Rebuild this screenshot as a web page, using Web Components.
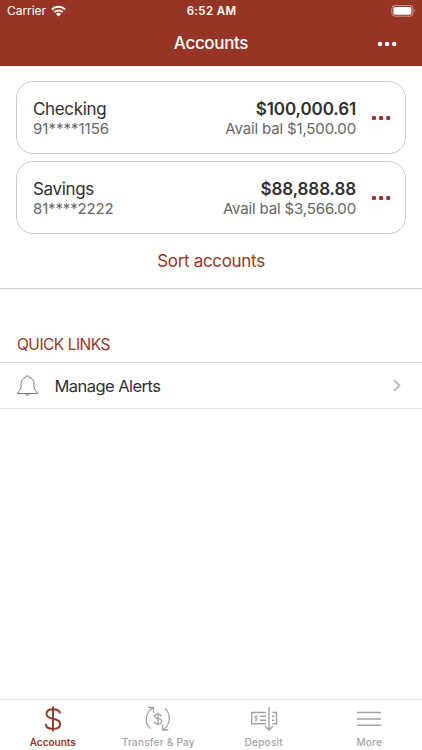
<!DOCTYPE html>
<html lang="en">
<head>
<meta charset="utf-8">
<title>Accounts</title>
<style>
html,body{margin:0;height:100%;background:#fff}
body{font-family:Inter,"Liberation Sans",sans-serif;color:#303030;--brand:#963526}
</style>
</head>
<body>
<bank-app></bank-app>
<script>
function define(name, html) {
  const t = document.createElement('template');
  t.innerHTML = html;
  customElements.define(name, class extends HTMLElement {
    constructor() {
      super();
      this.attachShadow({ mode: 'open' }).appendChild(t.content.cloneNode(true));
    }
  });
}

define('more-dots', `
<style>:host{display:block}svg{display:block}</style>
<svg width="20" height="6" viewBox="0 0 20 6" fill="currentColor"><circle cx="3" cy="3" r="2.2"/><circle cx="10.100" cy="3" r="2.200"/><circle cx="17.200" cy="3" r="2.200"/></svg>`);

define('status-bar', `
<style>
:host{display:grid;grid-template-columns:1fr auto 1fr;align-items:center;height:22px;padding:0 6px 0 7px;font-size:12px;line-height:22px}
.l{display:flex;align-items:center;gap:5px;letter-spacing:-.05px}
.t{font-weight:600;font-size:11.5px;letter-spacing:.35px}
.b{justify-self:end}
svg{display:block}
</style>
<div class="l"><span>Carrier</span><svg width="15" height="12" viewBox="0 0 15 12"><g fill="none" stroke="#fff" stroke-width="2"><path d="M.9 4.500a9.400 9.400 0 0 1 13.200 0"/><path d="M3.300 7.100a6 6 0 0 1 8.400 0"/></g><path d="M5 8.900a3.600 3.600 0 0 1 5 0L7.500 11.500z" fill="#fff"/></svg></div>
<div class="t">6:52 AM</div>
<svg class="b" width="25" height="12" viewBox="0 0 25 12"><rect x=".9" y=".6" width="21" height="10.600" rx="3" fill="none" stroke="#cf9b92"/><rect x="2.400" y="2.100" width="18" height="7.600" rx="1.600" fill="#fff"/><path d="M23.200 4.200q1.600 1.700 0 3.400z" fill="#cf9b92"/></svg>`);

define('nav-bar', `
<style>
:host{display:grid;grid-template-columns:1fr auto 1fr;align-items:center;height:43px;padding:0 25px}
h1{grid-column:2;margin:0;font-size:17px;font-weight:500;line-height:43px;letter-spacing:-.35px}
more-dots{justify-self:end}
</style><h1><slot></slot></h1><more-dots></more-dots>`);

define('account-card', `
<style>
:host{display:flex;align-items:center;box-sizing:border-box;height:73px;border:1px solid #ccc;border-radius:17px;padding:0 14px 0 16px}
.n{flex:1}.v{text-align:right;margin-right:15px}
.n,.v{padding-top:1px}
.top{font-size:17px;line-height:20px;letter-spacing:-.35px}.v .top{font-weight:600;letter-spacing:-.1px}
.sub{font-size:15px;line-height:19px;color:#666;letter-spacing:-.15px}
more-dots{color:var(--brand)}
</style>
<div class="n"><div class="top"><slot name="name"></slot></div><div class="sub"><slot name="number"></slot></div></div>
<div class="v"><div class="top"><slot name="balance"></slot></div><div class="sub">Avail bal <slot name="available"></slot></div></div>
<more-dots></more-dots>`);

define('link-row', `
<style>
:host{display:flex;align-items:center;box-sizing:border-box;height:47px;border-top:1px solid #dedede;border-bottom:1px solid #e8e8e8;padding:0 20px 0 16px;font-size:16.5px;letter-spacing:-.55px}
span{flex:1;margin-left:15.5px}
svg{display:block}
</style>
<svg width="23" height="22" viewBox="0 0 23 22" fill="none" stroke="#777" stroke-width="1" stroke-linejoin="round"><path d="M9.800 2.500a1.700 1.700 0 0 1 3.400 0C16.400 3.200 18 5.600 18 8.500v3.300c0 3 2.400 4.200 3.700 6.700H1.300C2.600 16 5 14.800 5 11.800V8.500C5 5.600 6.600 3.200 9.800 2.500M9.300 18.500a2.300 2.300 0 0 0 4.400 0"/></svg>
<span><slot></slot></span>
<svg width="10" height="14" viewBox="0 0 10 14" fill="none" stroke="#bdbdbd" stroke-width="1.800"><path d="M2 1 7.500 6.500 2 12"/></svg>`);

define('tab-item', `
<style>
:host{display:flex;flex-direction:column;align-items:center;color:#a3a3a3;font-size:10px;font-weight:500;line-height:13px;letter-spacing:.25px}
:host([active]){color:var(--brand);font-weight:600;letter-spacing:0}
.i{height:30px;margin:4px 0 2px;display:flex;align-items:center}
</style><div class="i"><slot name="icon"></slot></div><div><slot></slot></div>`);

define('tab-bar', `
<style>:host{display:grid;grid-template-columns:repeat(4,1fr);box-sizing:border-box;height:51px;border-top:1px solid #e9e9e9}svg{display:block;fill:none;stroke:currentColor}</style>
<tab-item active><svg slot="icon" width="18" height="28" viewBox="0 0 18 28" stroke-width="1.900"><path d="M9 1.500v25M16 8.500C15.600 5.700 13 4.300 9 4.300c-4 0-6.500 1.700-6.500 4.700 0 3.200 3 4.100 6.500 4.800 4 .8 7.200 1.800 7.200 5.200 0 3.100-2.900 4.900-7.200 4.900-4.400 0-7.100-1.900-7.300-5"/></svg>Accounts</tab-item>
<tab-item><svg slot="icon" width="26" height="26" viewBox="0 0 26 26" stroke-width="1.300"><path d="M5.500 22.500C-.5 17.500-.5 7.500 7.800 2M3 1.500h5.500v5.300M20 2.500c6 5.500 6 15.500-1.800 21.500M23.300 24h-5.800v-5.500M13 6.500v13M16.400 10.200c-.3-1.500-1.600-2.100-3.400-2.100s-3.300.7-3.300 2.300c0 3.200 7 1.400 7 4.900 0 1.700-1.600 2.500-3.700 2.500s-3.500-.8-3.700-2.500"/></svg>Transfer &amp; Pay</tab-item>
<tab-item><svg slot="icon" width="28" height="26" viewBox="0 0 28 26" stroke-width="1.400"><path d="M16 6.500H1.700v11.300H16M22.500 6.500h4v11.300h-4M19 1v23M15 20l4 4 4-4M10 10.300h6M10 14.300h6M22 10.300h2.300M22 14.300h2.300"/><path stroke-width=".9" d="M6 9v6.500M7.600 10.500Q6 9.500 4.800 10.500C4 12 8 12 7.300 13.800Q6 15 4.500 13.900"/></svg>Deposit</tab-item>
<tab-item><svg slot="icon" width="26" height="26" viewBox="0 0 26 26" stroke-width="1.500"><path d="M1 6.500h24M1 13h24M1 19.300h24"/></svg>More</tab-item>`);

define('bank-app', `
<style>
:host{display:flex;flex-direction:column;height:750px;width:422px}
header{background:var(--brand);color:#fff;height:66px}
.accounts{display:flex;flex-direction:column;gap:7px;box-sizing:border-box;height:223px;padding:15px 16px 0;border-bottom:1px solid #d0d0d0}
.sort{text-align:center;color:var(--brand);font-size:17px;line-height:22px;margin-top:9px;letter-spacing:-.32px}
main{flex:1}
h2{margin:0;padding:45px 17px 6px;color:var(--brand);font-size:15.5px;font-weight:400;line-height:22px;letter-spacing:-.5px}
</style>
<header><status-bar></status-bar><nav-bar>Accounts</nav-bar></header>
<main>
<section class="accounts">
<account-card><span slot="name">Checking</span><span slot="number" style="letter-spacing:0">91****1156</span><span slot="balance">$100,000.61</span><span slot="available">$1,500.00</span></account-card>
<account-card><span slot="name">Savings</span><span slot="number">81****2222</span><span slot="balance">$88,888.88</span><span slot="available">$3,566.00</span></account-card>
<div class="sort">Sort accounts</div>
</section>
<section><h2>QUICK LINKS</h2><link-row>Manage Alerts</link-row></section>
</main>
<tab-bar></tab-bar>`);
</script>
</body>
</html>
